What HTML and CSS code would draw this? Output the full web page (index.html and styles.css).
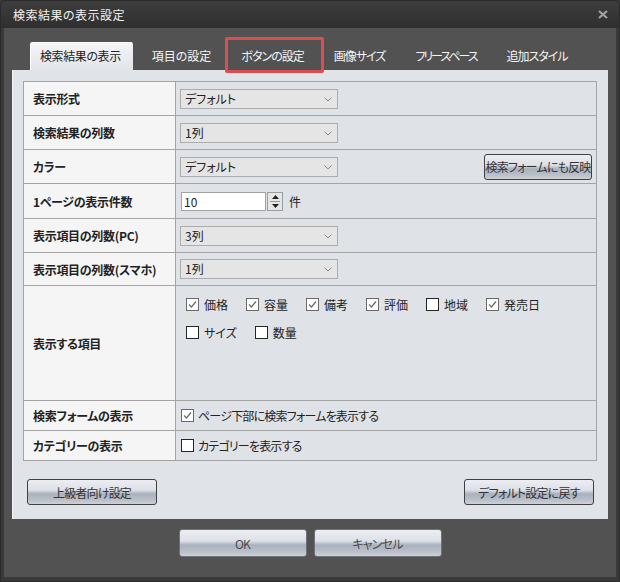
FILE: index.html
```html
<!DOCTYPE html>
<html>

<head>
  <meta charset="UTF-8">
  <title>検索結果の表示設定</title>
  <link rel="stylesheet" href="styles.css">
</head>

<body>
  <div class="window">
    <div class="titlebar">
      <span class="title">検索結果の表示設定</span>
      <svg class="close" width="10" height="9" viewBox="0 0 10 9">
        <path d="M1 1 L9 8 M9 1 L1 8" stroke="#9da1a8" stroke-width="2.2" fill="none" />
      </svg>
    </div>
    <div class="frame">
      <div class="tabs">
        <div class="tab active">検索結果の表示</div>
        <div class="tab loose">項目の設定</div>
        <div class="tab marked">ボタンの設定</div>
        <div class="tab">画像サイズ</div>
        <div class="tab tight">フリースペース</div>
        <div class="tab">追加スタイル</div>
      </div>
      <div class="panel">
        <table class="settings">
          <tr class="h34">
            <th>表示形式</th>
            <td><div class="select">デフォルト<svg class="chev" width="8" height="5" viewBox="0 0 8 5"><path d="M0.5 0.5 L4 4 L7.5 0.5" /></svg></div></td>
          </tr>
          <tr class="h34">
            <th>検索結果の列数</th>
            <td><div class="select">1列<svg class="chev" width="8" height="5" viewBox="0 0 8 5"><path d="M0.5 0.5 L4 4 L7.5 0.5" /></svg></div></td>
          </tr>
          <tr class="h34">
            <th>カラー</th>
            <td>
              <div class="split">
                <div class="select">デフォルト<svg class="chev" width="8" height="5" viewBox="0 0 8 5"><path d="M0.5 0.5 L4 4 L7.5 0.5" /></svg></div>
                <button class="btn small">検索フォームにも反映</button>
              </div>
            </td>
          </tr>
          <tr class="h35">
            <th>1ページの表示件数</th>
            <td>
              <div class="number">
                <div class="num-input">10</div>
                <div class="spin">
                  <svg width="7" height="4" viewBox="0 0 7 4"><path d="M0 4 L3.5 0 L7 4 Z" /></svg>
                  <i></i>
                  <svg width="7" height="4" viewBox="0 0 7 4"><path d="M0 0 L3.5 4 L7 0 Z" /></svg>
                </div>
                <span class="unit">件</span>
              </div>
            </td>
          </tr>
          <tr class="h34">
            <th>表示項目の列数(PC)</th>
            <td><div class="select">3列<svg class="chev" width="8" height="5" viewBox="0 0 8 5"><path d="M0.5 0.5 L4 4 L7.5 0.5" /></svg></div></td>
          </tr>
          <tr class="h33">
            <th>表示項目の列数(スマホ)</th>
            <td><div class="select">1列<svg class="chev" width="8" height="5" viewBox="0 0 8 5"><path d="M0.5 0.5 L4 4 L7.5 0.5" /></svg></div></td>
          </tr>
          <tr class="h115">
            <th>表示する項目</th>
            <td class="items">
              <div class="item-row">
                <label class="check"><span class="cb on"><svg width="11" height="11" viewBox="0 0 11 11"><path d="M2 5.5 L4.5 8 L9 2.5" /></svg></span>価格</label>
                <label class="check"><span class="cb on"><svg width="11" height="11" viewBox="0 0 11 11"><path d="M2 5.5 L4.5 8 L9 2.5" /></svg></span>容量</label>
                <label class="check"><span class="cb on"><svg width="11" height="11" viewBox="0 0 11 11"><path d="M2 5.5 L4.5 8 L9 2.5" /></svg></span>備考</label>
                <label class="check"><span class="cb on"><svg width="11" height="11" viewBox="0 0 11 11"><path d="M2 5.5 L4.5 8 L9 2.5" /></svg></span>評価</label>
                <label class="check"><span class="cb"></span>地域</label>
                <label class="check"><span class="cb on"><svg width="11" height="11" viewBox="0 0 11 11"><path d="M2 5.5 L4.5 8 L9 2.5" /></svg></span>発売日</label>
              </div>
              <div class="item-row">
                <label class="check"><span class="cb"></span>サイズ</label>
                <label class="check"><span class="cb"></span>数量</label>
              </div>
            </td>
          </tr>
          <tr class="h30">
            <th>検索フォームの表示</th>
            <td><label class="check tight"><span class="cb on"><svg width="11" height="11" viewBox="0 0 11 11"><path d="M2 5.5 L4.5 8 L9 2.5" /></svg></span>ページ下部に検索フォームを表示する</label></td>
          </tr>
          <tr class="h30">
            <th>カテゴリーの表示</th>
            <td><label class="check tight"><span class="cb"></span>カテゴリーを表示する</label></td>
          </tr>
        </table>
        <div class="panel-actions">
          <button class="btn wide">上級者向け設定</button>
          <button class="btn wide">デフォルト設定に戻す</button>
        </div>
      </div>
      <div class="footer">
        <button class="btn big">OK</button>
        <button class="btn big">キャンセル</button>
      </div>
    </div>
  </div>
</body>

</html>
```

FILE: styles.css
```css
body {
  margin: 0;
  padding: 0;
  background: #383838;
  font-family: "Noto Sans CJK JP", "Noto Sans", sans-serif;
  font-size: 12px;
  font-feature-settings: "palt";
  color: #222;
}

.window {
  width: 620px;
  height: 582px;
  background: #393939;
  border-radius: 6px 6px 0 0;
  box-sizing: border-box;
  border: 1px solid #2a2a2a;
  overflow: hidden;
}

.titlebar {
  height: 27px;
  display: flex;
  align-items: center;
  justify-content: space-between;
  padding: 0 11px 0 12px;
  background: linear-gradient(#3d3d3d, #2f2f2f);
}

.title {
  color: #f2f2f2;
  font-size: 12px;
  line-height: 14px;
  letter-spacing: 0.5px;
}

.close {
  display: block;
}

.frame {
  margin: 0 3px;
  height: 549px;
  background: #525252;
  padding-top: 14px;
  box-sizing: border-box;
}

/* tabs */
.tabs {
  display: flex;
  gap: 8px;
  height: 28px;
  margin-left: 26px;
}

.tab {
  position: relative;
  padding: 0 11px;
  line-height: 28px;
  color: #f4f4f4;
  white-space: nowrap;
  letter-spacing: -1px;
}

.tab.loose {
  letter-spacing: 0;
}

.tab.tight {
  letter-spacing: -2px;
}

.tab.active {
  padding: 0 12px 0 10px;
  letter-spacing: -0.4px;
  color: #222;
  background: linear-gradient(#f5f6f8, #e1e4e9);
  border-radius: 3px 3px 0 0;
  box-shadow: inset 1px 1px 0 #ffffff;
}

.tab.marked::after {
  content: "";
  position: absolute;
  left: -5px;
  right: -9px;
  top: -5px;
  bottom: -3px;
  border: 3px solid #dd4d4f;
  border-radius: 2px;
}

/* panel */
.panel {
  margin: 0 8px;
  height: 449px;
  box-sizing: border-box;
  padding: 11px 10px 0 11px;
  background: #e0e3e8;
  box-shadow: inset 1px 0 0 #f2f3f5;
}

.settings {
  width: 574px;
  table-layout: fixed;
  border-collapse: collapse;
  border: 1px solid #9f9f9f;
}

.settings th {
  width: 142px;
  text-align: left;
  font-weight: bold;
  padding: 0 0 0 9px;
  background: #f5f5f5;
  border: 1px solid #a4a4a4;
  white-space: nowrap;
  letter-spacing: -0.3px;
}

.settings td {
  padding: 0 0 0 4px;
  background: #dfe2e7;
  border: 1px solid #a4a4a4;
}

.h30 { height: 30px; }
.h33 { height: 33px; }
.h34 { height: 34px; }
.h35 { height: 35px; }
.h115 { height: 115px; }

.select {
  position: relative;
  width: 158px;
  height: 20px;
  box-sizing: border-box;
  border: 1px solid #acacac;
  background: #e5e5e5;
  padding-left: 4px;
  line-height: 18px;
}

.chev {
  position: absolute;
  right: 5px;
  top: 7px;
}

.chev path {
  fill: none;
  stroke: #8a8a8a;
  stroke-width: 1;
}

.split {
  display: flex;
  justify-content: space-between;
  align-items: center;
  padding-right: 4px;
}

.number {
  display: flex;
  align-items: center;
  padding-left: 1px;
}

.num-input {
  width: 85px;
  height: 19px;
  box-sizing: border-box;
  border: 1px solid #a2a2a2;
  background: #fff;
  padding-left: 2px;
  line-height: 17px;
}

.spin {
  width: 16px;
  height: 19px;
  box-sizing: border-box;
  margin-left: 1px;
  border: 1px solid #9c9c9c;
  background: #e6e6e6;
  display: flex;
  flex-direction: column;
  align-items: center;
  justify-content: space-between;
  padding: 2px 0;
}

.spin i {
  display: block;
  width: 10px;
  height: 1px;
  background: #9a9a9a;
}

.spin path {
  fill: #222;
}

.unit {
  margin-left: 6px;
}

/* checkboxes */
.settings td.items {
  vertical-align: top;
  padding: 8px 0 0 10px;
}

.item-row {
  display: flex;
  gap: 18px;
  height: 20px;
  align-items: center;
  margin-bottom: 8px;
}

.check {
  display: flex;
  align-items: center;
  gap: 5px;
  white-space: nowrap;
}

.check.tight {
  gap: 4px;
  padding-left: 1px;
  letter-spacing: -0.8px;
}

.cb {
  width: 13px;
  height: 13px;
  box-sizing: border-box;
  border: 1px solid #262626;
  background: #fff;
  display: flex;
  align-items: center;
  justify-content: center;
}

.cb.on {
  border-color: #6a6a6a;
}

.cb path {
  fill: none;
  stroke: #6e6e6e;
  stroke-width: 1.3;
}

/* buttons */
.btn {
  font-family: inherit;
  font-size: 12px;
  font-feature-settings: "palt";
  letter-spacing: -0.8px;
  white-space: nowrap;
  color: #333;
  border: 1px solid #3e4044;
  border-radius: 3px;
  padding: 0;
  background: linear-gradient(#eceef3 0%, #dde0e7 42%, #aab1bd 58%, #bcc1ca 85%, #cdd1d8 100%);
}

.btn.small {
  width: 108px;
  height: 26px;
}

.btn.wide {
  width: 130px;
  height: 26px;
}

.panel-actions {
  display: flex;
  justify-content: space-between;
  margin-top: 18px;
  padding: 0 4px 0 4px;
}

.footer {
  display: flex;
  justify-content: center;
  gap: 7px;
  margin-top: 10px;
}

.btn.big {
  width: 128px;
  height: 28px;
  color: #4a4a4a;
  border-color: #6f7278;
}
```
